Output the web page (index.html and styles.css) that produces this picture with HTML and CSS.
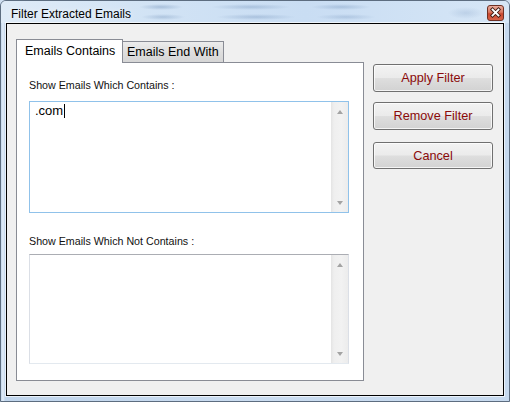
FILE: index.html
```html
<!DOCTYPE html>
<html>
<head>
<meta charset="utf-8">
<title>Filter Extracted Emails</title>
<link rel="stylesheet" href="styles.css">
</head>
<body>
<div class="window">
  <div class="titlebar">
    <span class="title">Filter Extracted Emails</span>
    <span class="close">
      <svg width="17" height="16" viewBox="0 0 17 16">
        <defs>
          <linearGradient id="cg" x1="0" y1="0" x2="0" y2="1">
            <stop offset="0" stop-color="#eab0a2"/>
            <stop offset="0.45" stop-color="#d9765f"/>
            <stop offset="0.55" stop-color="#c9472f"/>
            <stop offset="1" stop-color="#d8644a"/>
          </linearGradient>
        </defs>
        <rect x="0.5" y="0.5" width="16" height="15" rx="2.5" fill="url(#cg)" stroke="#6e3024"/>
        <path d="M5.5 4.5 L11.5 10.5 M11.5 4.5 L5.5 10.5" stroke="#3b1a14" stroke-width="3.6" stroke-linecap="square"/>
        <path d="M5.5 4.5 L11.5 10.5 M11.5 4.5 L5.5 10.5" stroke="#ffffff" stroke-width="1.8" stroke-linecap="square"/>
      </svg>
    </span>
  </div>
  <div class="client">
    <div class="tabctl">
      <div class="tabs">
        <div class="tab active">Emails Contains</div>
        <div class="tab inactive">Emails End With</div>
      </div>
      <div class="panel">
        <div class="label">Show Emails Which Contains :</div>
        <div class="textbox focused">
          <div class="text">.com<span class="caret"></span></div>
          <div class="scroll"><span class="arrow up"></span><span class="arrow down"></span></div>
        </div>
        <div class="label second">Show Emails Which Not Contains :</div>
        <div class="textbox plain">
          <div class="text"></div>
          <div class="scroll"><span class="arrow up"></span><span class="arrow down"></span></div>
        </div>
      </div>
    </div>
    <div class="buttons">
      <div class="btn apply">Apply Filter</div>
      <div class="btn remove">Remove Filter</div>
      <div class="btn cancel">Cancel</div>
    </div>
  </div>
</div>
</body>
</html>
```
FILE: styles.css
```css
html, body {
  margin: 0;
  padding: 0;
  background: #cfdff1;
}

.window {
  width: 510px;
  height: 402px;
  box-sizing: border-box;
  border: 1px solid #5d6d80;
  border-radius: 6px 6px 0 0;
  padding: 0 5px 5px 5px;
  display: flex;
  flex-direction: column;
  background: linear-gradient(to right, #c3d7ed 0px, #e4eef9 2px, #c0d5ec 4px, #cadcf0 50%, #c6d9ee 100%);
  font-family: "Liberation Sans", Arial, sans-serif;
  overflow: hidden;
}

.titlebar {
  height: 22px;
  flex: none;
  display: flex;
  justify-content: space-between;
  align-items: flex-start;
  margin: 0 -5px;
  padding: 0 5px;
  background:
    radial-gradient(ellipse 22px 3px at 160px 6px, rgba(90,125,170,0.35), rgba(90,125,170,0)),
    radial-gradient(ellipse 22px 3px at 162px 16px, rgba(90,125,170,0.3), rgba(90,125,170,0)),
    radial-gradient(ellipse 40px 3px at 250px 6px, rgba(90,125,170,0.3), rgba(90,125,170,0)),
    radial-gradient(ellipse 40px 3px at 255px 16px, rgba(90,125,170,0.3), rgba(90,125,170,0)),
    radial-gradient(ellipse 30px 3px at 340px 6px, rgba(90,125,170,0.3), rgba(90,125,170,0)),
    radial-gradient(ellipse 30px 3px at 345px 16px, rgba(90,125,170,0.25), rgba(90,125,170,0)),
    radial-gradient(ellipse 18px 6px at 465px 12px, rgba(120,150,190,0.25), rgba(120,150,190,0)),
    linear-gradient(to right, #dfebf7 0%, #d3e4f5 25%, #c9ddf3 60%, #d6e6f6 100%);
}

.title {
  padding: 6px 0 0 5px;
  font-size: 12px;
  line-height: 14px;
  color: #000;
  text-shadow: 0 0 6px rgba(255,255,255,0.9);
}

.close {
  display: block;
  width: 17px;
  height: 16px;
  margin-top: 4px;
}

.close svg {
  display: block;
}

.client {
  flex: 1;
  display: flex;
  gap: 9px;
  padding: 15px 0 0 9px;
  background: #f0f0f0;
  border: 1px solid #000;
  box-shadow: 0 0 0 1px rgba(255,255,255,0.65);
}

.tabctl {
  width: 348px;
  display: flex;
  flex-direction: column;
}

.tabs {
  height: 23px;
  display: flex;
  align-items: flex-end;
}

.tab {
  box-sizing: border-box;
  border: 1px solid #898c95;
  border-bottom: none;
  font-size: 12.5px;
  line-height: 15px;
  color: #000;
  white-space: nowrap;
}

.tab.active {
  width: 107px;
  height: 24px;
  margin-bottom: -1px;
  padding: 4px 0 0 8px;
  background: #fff;
  position: relative;
  z-index: 1;
}

.tab.inactive {
  width: 102px;
  height: 21px;
  margin-left: -1px;
  padding: 3px 0 0 4px;
  background: linear-gradient(#ececec, #dedede 50%, #d6d6d6);
}

.panel {
  height: 319px;
  box-sizing: border-box;
  border: 1px solid #898c95;
  background: #fff;
  padding: 16px 0 0 12px;
}

.label {
  height: 13px;
  font-size: 10.7px;
  line-height: 13px;
  color: #111;
  margin-bottom: 9px;
}

.label.second {
  margin-bottom: 6px;
}

.textbox {
  width: 320px;
  box-sizing: border-box;
  display: flex;
}

.textbox.focused {
  height: 112px;
  border: 1px solid #90c2ea;
  margin-bottom: 22px;
}

.textbox.plain {
  height: 110px;
  border: 1px solid #dbdfe6;
  border-top-color: #abadb3;
  border-bottom-color: #e3e9ef;
}

.text {
  flex: 1;
  padding: 1px 5px;
  font-size: 13px;
  line-height: 15px;
  color: #000;
}

.caret {
  display: inline-block;
  width: 1px;
  height: 14px;
  background: #000;
  vertical-align: -3px;
  margin-left: 1px;
}

.scroll {
  width: 17px;
  flex: none;
  display: flex;
  flex-direction: column;
  justify-content: space-between;
  align-items: center;
  padding: 8px 0 7px;
  box-sizing: border-box;
  background: linear-gradient(to right, #e4e4e4 0px, #efefef 3px, #f2f2f2 60%, #ececec 100%);
}

.arrow {
  display: block;
  width: 0;
  height: 0;
  border-left: 3.5px solid transparent;
  border-right: 3.5px solid transparent;
}

.arrow.up {
  border-bottom: 4px solid #a3a3a3;
}

.arrow.down {
  border-top: 4px solid #a3a3a3;
}

.buttons {
  width: 120px;
  display: flex;
  flex-direction: column;
  padding-top: 25px;
}

.btn {
  box-sizing: border-box;
  border: 1px solid #707070;
  border-radius: 3px;
  background: linear-gradient(#f3f3f3 0%, #ebebeb 48%, #dedede 52%, #d2d2d2 100%);
  box-shadow: inset 0 0 0 1px rgba(255,255,255,0.75);
  color: #8a0a0a;
  font-size: 12.7px;
  text-align: center;
  display: flex;
  align-items: center;
  justify-content: center;
}

.btn.apply {
  height: 28px;
}

.btn.remove {
  height: 28px;
  margin-top: 10px;
}

.btn.cancel {
  height: 27px;
  margin-top: 12px;
}
```
